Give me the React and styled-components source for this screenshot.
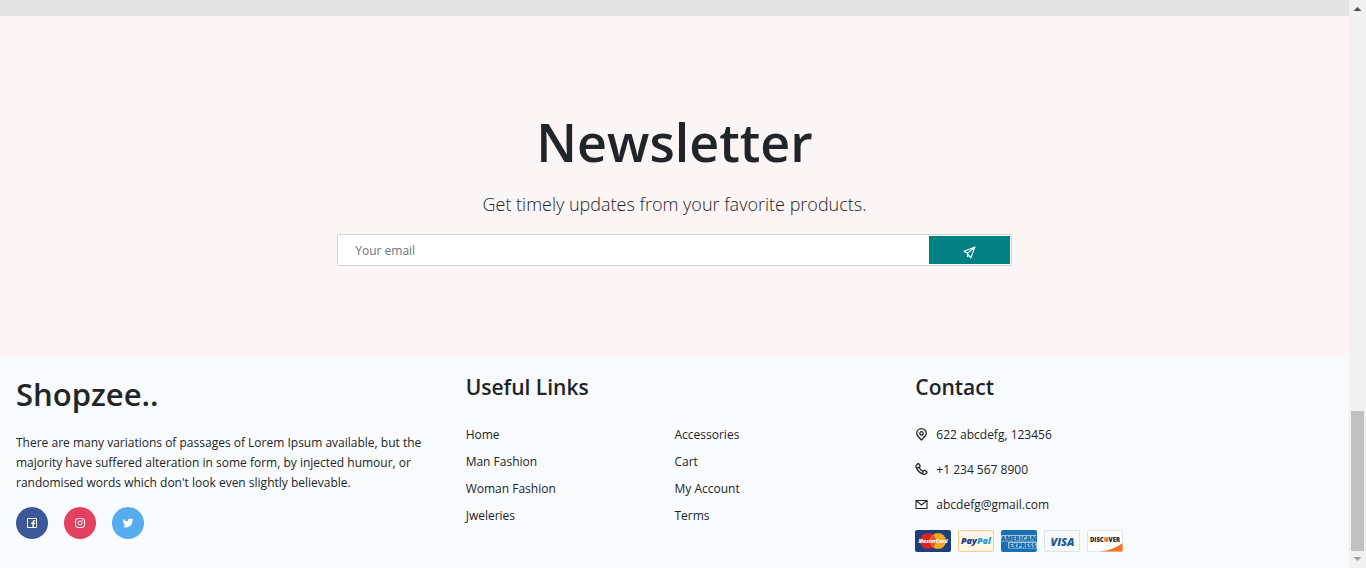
import React from "react";
import styled, { createGlobalStyle } from "styled-components";

const GlobalStyle = createGlobalStyle`
  *, *::before, *::after { box-sizing: border-box; }
  body {
    margin: 0;
    color: #212529;
    background: #f8fafc;
    font-family: "Open Sans", "Noto Sans", sans-serif;
    font-size: 12px;
    line-height: 20px;
  }
  h1, h2, h3, p, ul, address { margin: 0; padding: 0; font-style: normal; }
`;

const Window = styled.div`
  display: grid;
  grid-template-columns: 1fr 17px;
  min-height: 100vh;
`;

const Page = styled.main`
  display: flex;
  flex-direction: column;
  min-width: 0;
`;

const Strip = styled.div`
  height: 16px;
  background: #e4e4e4;
`;

const Newsletter = styled.section`
  display: flex;
  flex-direction: column;
  align-items: center;
  padding: 88px 0 92px;
  background: #fcf5f5;
`;

const Title = styled.h1`
  font-size: 52px;
  line-height: 76px;
  font-weight: 600;
`;

const Lead = styled.p`
  margin: 11px 0 17px;
  font-size: 18px;
  line-height: 26px;
  font-weight: 300;
`;

const Form = styled.form`
  display: flex;
  width: 50%;
  height: 32px;
  padding: 1px;
  background: #fff;
  border: 1px solid #ced4da;
  border-radius: 2px;
`;

const EmailInput = styled.input`
  flex: 1;
  min-width: 0;
  padding: 2px 16px 0;
  border: 0;
  outline: 0;
  background: transparent;
  color: #212529;
  font: inherit;
  &::placeholder { color: #6c757d; opacity: 1; }
`;

const SendButton = styled.button`
  display: flex;
  align-items: center;
  justify-content: center;
  width: 12%;
  padding: 4px 0 0;
  border: 0;
  background: #008080;
  color: #fff;
`;

const Footer = styled.footer`
  flex: 1;
  display: grid;
  grid-template-columns: repeat(3, 1fr);
  background: #f8fafc;
`;

const Column = styled.div`
  min-width: 0;
  padding: 16px;
`;

const Brand = styled.h2`
  font-size: 31px;
  line-height: 40px;
  font-weight: 600;
`;

const About = styled.p`
  margin: 19px 0 14px;
`;

const Socials = styled.div`
  display: flex;
  gap: 16px;
`;

const SocialLink = styled.a`
  display: flex;
  align-items: center;
  justify-content: center;
  width: 32px;
  height: 32px;
  border-radius: 50%;
  background: ${(p) => p.$color};
  color: #fff;
`;

const Heading = styled.h3`
  margin-bottom: 25px;
  font-size: 21px;
  line-height: 26px;
  font-weight: 600;
`;

const LinkGrid = styled.ul`
  display: grid;
  grid-template-columns: 1fr 1fr;
  row-gap: 7px;
  list-style: none;
`;

const FooterLink = styled.a`
  color: inherit;
  text-decoration: none;
`;

const ContactList = styled.address`
  display: flex;
  flex-direction: column;
  gap: 15px;
`;

const ContactRow = styled.div`
  display: flex;
  align-items: center;
  gap: 8px;
`;

const Cards = styled.div`
  display: flex;
  gap: 7px;
  margin-top: 15px;
`;

const CardArt = styled.svg`
  display: block;
  width: 36px;
  height: 22px;
  font-family: "Open Sans", sans-serif;
  font-weight: 800;
`;

const Scrollbar = styled.div`
  display: flex;
  flex-direction: column;
  align-items: center;
  background: #f1f1f1;
`;

const Arrow = styled.svg`
  display: block;
  width: 17px;
  height: 17px;
`;

const Track = styled.div`
  flex: 1;
  display: flex;
  align-items: flex-end;
`;

const Thumb = styled.div`
  width: 13px;
  height: 140px;
  background: #c1c1c1;
`;

const SendIcon = () => (
  <svg width="13" height="13" viewBox="0 0 13 13" fill="none" stroke="currentColor" strokeWidth="1.1" strokeLinejoin="round" aria-hidden="true">
    <path d="M12 1 1 5.2l3.5 2L7.700 12ZM4.500 7.200 12 1M4.500 7.200v3.400l1.700-1.200" />
  </svg>
);

const FacebookIcon = () => (
  <svg width="12" height="12" viewBox="0 0 12 12" fill="none" stroke="currentColor" aria-hidden="true">
    <path d="M1.500 1.500h9v9h-9z" />
    <path d="M9.300 3.600h-.8c-.9 0-1.400.5-1.400 1.400v5.500M5.200 6.300h3.900" strokeWidth="1.400" />
  </svg>
);

const InstagramIcon = () => (
  <svg width="12" height="12" viewBox="0 0 12 12" fill="none" stroke="currentColor" aria-hidden="true">
    <rect x="1.500" y="1.500" width="9" height="9" rx="2.500" />
    <circle cx="6" cy="6" r="2" />
    <circle cx="8.500" cy="3.500" r=".6" fill="currentColor" stroke="none" />
  </svg>
);

const TwitterIcon = () => (
  <svg width="12" height="12" viewBox="0 0 24 24" fill="currentColor" aria-hidden="true">
    <path d="M23 5.100a8.700 8.700 0 0 1-2.600.7 4.500 4.500 0 0 0 2-2.500 9 9 0 0 1-2.900 1.100A4.500 4.500 0 0 0 11.800 8.500 12.900 12.900 0 0 1 2.500 3.800a4.500 4.500 0 0 0 1.400 6 4.500 4.500 0 0 1-2-.6 4.500 4.500 0 0 0 3.600 4.500 4.600 4.600 0 0 1-2 .1 4.500 4.500 0 0 0 4.200 3.100A9.100 9.100 0 0 1 1 18.800 12.800 12.800 0 0 0 20.700 7.400 9.200 9.200 0 0 0 23 5.100Z" />
  </svg>
);

const PinIcon = () => (
  <svg width="13" height="14" viewBox="0 0 13 14" fill="none" stroke="currentColor" strokeWidth="1.300" aria-hidden="true">
    <path d="M6.500 12C3.500 9.300 1.700 7.500 1.700 5.300a4.800 4.600 0 0 1 9.600 0c0 2.200-1.800 4-4.800 6.700Z" />
    <circle cx="6.500" cy="5.300" r="1.700" />
  </svg>
);

const PhoneIcon = () => (
  <svg width="13" height="14" viewBox="0 0 13 14" fill="none" stroke="currentColor" strokeWidth="1.300" strokeLinejoin="round" aria-hidden="true">
    <path d="M1.400 2.100 2.700.8q.6-.5 1.200.1L5 2.500q.4.700-.1 1.200l-.8.8q1.300 2.700 3.900 3.900l.8-.8q.6-.5 1.200-.1l1.600 1.100q.6.500.1 1.100l-1.300 1.400q-.6.500-1.700.2Q2.800 9.400 1 3.700q-.2-1 .4-1.600Z" />
    <path d="m2 4.800 2.100-.3M7.700 10.500 8 8.400" />
  </svg>
);

const MailIcon = () => (
  <svg width="13" height="14" viewBox="0 0 13 14" fill="none" stroke="currentColor" strokeWidth="1.100" aria-hidden="true">
    <path d="M1 2.500h11v8H1zM1.300 2.800 6.500 7l5.200-4.200" />
  </svg>
);

const MasterCard = () => (
  <CardArt viewBox="0 0 36 22" role="img" aria-label="MasterCard">
    <rect width="36" height="22" rx="2" fill="#1d3f7c" />
    <circle cx="13" cy="11" r="8" fill="#d9222a" />
    <circle cx="23" cy="11" r="8" fill="#f5a623" />
    <path d="M18 4.800a8 8 0 0 1 0 12.400 8 8 0 0 1 0-12.400Z" fill="#e4572a" />
    <text x="18" y="13" textAnchor="middle" fontSize="5" fontStyle="italic" fill="#fff">MasterCard</text>
  </CardArt>
);

const PayPal = () => (
  <CardArt viewBox="0 0 36 22" role="img" aria-label="PayPal">
    <rect x=".5" y=".5" width="35" height="21" rx="1.500" fill="#fff5e4" stroke="#f9cb8c" />
    <text x="18" y="14" textAnchor="middle" fontSize="9" fontStyle="italic" fill="#253b80">Pay<tspan fill="#229bd6">Pal</tspan></text>
  </CardArt>
);

const Amex = () => (
  <CardArt viewBox="0 0 36 22" role="img" aria-label="American Express">
    <rect width="36" height="22" rx="2" fill="#1a6fb0" />
    <path d="M0 5h35v6.500H0zM7 12h29v6.500H7z" fill="#9cc8e8" />
    <text x="17.500" y="10.500" textAnchor="middle" fontSize="6.400" fill="#14609f">AMERICAN</text>
    <text x="21.500" y="17.500" textAnchor="middle" fontSize="6.400" fill="#14609f">EXPRESS</text>
  </CardArt>
);

const Visa = () => (
  <CardArt viewBox="0 0 36 22" role="img" aria-label="Visa">
    <rect x=".5" y=".5" width="35" height="21" rx="1" fill="#f8f9fb" stroke="#dde3ea" />
    <text x="18.500" y="15.500" textAnchor="middle" fontSize="11" fontStyle="italic" fill="#19579f">VISA</text>
    <path d="M6.500 7.400h3l1.200 4.200Q9 8.700 6.500 7.400Z" fill="#e9a622" />
  </CardArt>
);

const Discover = () => (
  <CardArt viewBox="0 0 36 22" role="img" aria-label="Discover">
    <rect x=".5" y=".5" width="35" height="21" rx="1" fill="#fff" stroke="#e1e6ea" />
    <path d="M12 21.500Q27 20 35.500 13v8.500Z" fill="#f77421" />
    <text x="18" y="12.300" textAnchor="middle" fontSize="6" fill="#282828">DISC<tspan fill="#f08035">O</tspan>VER</text>
    <circle cx="19.500" cy="10" r="2" fill="#f08035" />
  </CardArt>
);

const links = [
  "Home", "Accessories",
  "Man Fashion", "Cart",
  "Woman Fashion", "My Account",
  "Jweleries", "Terms",
];

const socials = [
  { name: "Facebook", color: "#3b5999", Icon: FacebookIcon },
  { name: "Instagram", color: "#e4405f", Icon: InstagramIcon },
  { name: "Twitter", color: "#55acee", Icon: TwitterIcon },
];

const contacts = [
  { text: "622 abcdefg, 123456", Icon: PinIcon },
  { text: "+1 234 567 8900", Icon: PhoneIcon },
  { text: "abcdefg@gmail.com", Icon: MailIcon },
];

export default function App() {
  return (
    <>
      <GlobalStyle />
      <Window>
        <Page>
          <Strip />
          <Newsletter>
            <Title>Newsletter</Title>
            <Lead>Get timely updates from your favorite products.</Lead>
            <Form onSubmit={(e) => e.preventDefault()}>
              <EmailInput type="email" placeholder="Your email" aria-label="Your email" />
              <SendButton type="submit" aria-label="Send"><SendIcon /></SendButton>
            </Form>
          </Newsletter>
          <Footer>
            <Column>
              <Brand>Shopzee..</Brand>
              <About>
                There are many variations of passages of Lorem Ipsum available, but the majority have
                suffered alteration in some form, by injected humour, or randomised words which don't
                look even slightly believable.
              </About>
              <Socials>
                {socials.map(({ name, color, Icon }) => (
                  <SocialLink key={name} href="#" $color={color} aria-label={name}><Icon /></SocialLink>
                ))}
              </Socials>
            </Column>
            <Column>
              <Heading>Useful Links</Heading>
              <LinkGrid>
                {links.map((label) => (
                  <li key={label}><FooterLink href="#">{label}</FooterLink></li>
                ))}
              </LinkGrid>
            </Column>
            <Column>
              <Heading>Contact</Heading>
              <ContactList>
                {contacts.map(({ text, Icon }) => (
                  <ContactRow key={text}><Icon />{text}</ContactRow>
                ))}
              </ContactList>
              <Cards>
                <MasterCard />
                <PayPal />
                <Amex />
                <Visa />
                <Discover />
              </Cards>
            </Column>
          </Footer>
        </Page>
        <Scrollbar aria-hidden="true">
          <Arrow viewBox="0 0 17 17"><path d="M4.500 11 8.500 7l4 4Z" fill="#505050" /></Arrow>
          <Track><Thumb /></Track>
          <Arrow viewBox="0 0 17 17"><path d="m4.500 6 4 4 4-4Z" fill="#a3a3a3" /></Arrow>
        </Scrollbar>
      </Window>
    </>
  );
}
